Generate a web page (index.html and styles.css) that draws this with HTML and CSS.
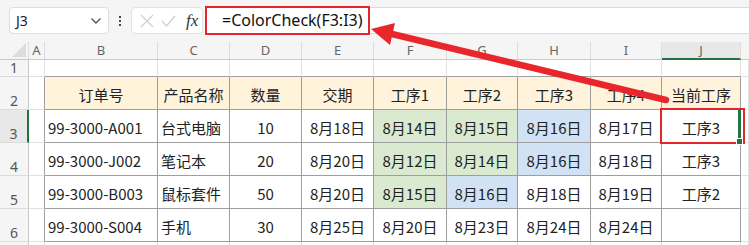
FILE: index.html
```html
<!DOCTYPE html>
<html>
<head>
<meta charset="utf-8">
<link rel="stylesheet" href="styles.css">
</head>
<body>
<div class="app">
  <div class="toolbar">
    <div class="namebox">
      <span class="name">J3</span>
      <svg class="chev" width="12" height="8" viewBox="0 0 12 8"><path d="M1.5 1.5 L6 6 L10.5 1.5" fill="none" stroke="#555" stroke-width="1.4"/></svg>
    </div>
    <div class="dots"><span></span><span></span><span></span></div>
    <div class="fxbox">
      <svg width="14" height="14" viewBox="0 0 14 14"><path d="M1 1 L13 13 M13 1 L1 13" stroke="#d0d0d0" stroke-width="1.3" fill="none"/></svg>
      <svg width="15" height="12" viewBox="0 0 15 12"><path d="M1 6 L5.5 11 L14 1" stroke="#d0d0d0" stroke-width="1.3" fill="none"/></svg>
      <span class="fx">fx</span>
    </div>
    <div class="formula">
      <div class="formula-text">=ColorCheck(F3:I3)</div>
    </div>
  </div>
  <div class="sheet">
    <div class="corner"><svg width="14" height="14" viewBox="0 0 14 14"><path d="M14 0 L14 14 L0 14 Z" fill="#dcdcdc"/></svg></div>
    <div class="ch">A</div><div class="ch">B</div><div class="ch">C</div><div class="ch">D</div><div class="ch">E</div><div class="ch">F</div><div class="ch">G</div><div class="ch">H</div><div class="ch">I</div><div class="ch ch-sel">J</div><div class="ch ch-end"></div>

    <div class="rh">1</div>
    <div class="c"></div><div class="c tb"></div><div class="c tb"></div><div class="c tb"></div><div class="c tb"></div><div class="c tb"></div><div class="c tb"></div><div class="c tb"></div><div class="c tb"></div><div class="c tb"></div><div class="c"></div>

    <div class="rh">2</div>
    <div class="c ta"></div>
    <div class="c t hd">订单号</div><div class="c t hd">产品名称</div><div class="c t hd">数量</div><div class="c t hd">交期</div><div class="c t hd">工序1</div><div class="c t hd">工序2</div><div class="c t hd">工序3</div><div class="c t hd">工序4</div><div class="c t hd">当前工序</div>
    <div class="c"></div>

    <div class="rh rh-sel">3</div>
    <div class="c ta"></div>
    <div class="c t l">99-3000-A001</div><div class="c t l">台式电脑</div><div class="c t">10</div><div class="c t">8月18日</div><div class="c t g">8月14日</div><div class="c t g">8月15日</div><div class="c t b">8月16日</div><div class="c t">8月17日</div><div class="c t sel">工序3<span class="handle"></span></div>
    <div class="c"></div>

    <div class="rh">4</div>
    <div class="c ta"></div>
    <div class="c t l">99-3000-J002</div><div class="c t l">笔记本</div><div class="c t">20</div><div class="c t">8月20日</div><div class="c t g">8月12日</div><div class="c t g">8月14日</div><div class="c t b">8月16日</div><div class="c t">8月18日</div><div class="c t">工序3</div>
    <div class="c"></div>

    <div class="rh">5</div>
    <div class="c ta"></div>
    <div class="c t l">99-3000-B003</div><div class="c t l">鼠标套件</div><div class="c t">50</div><div class="c t">8月20日</div><div class="c t g">8月15日</div><div class="c t b">8月16日</div><div class="c t">8月18日</div><div class="c t">8月19日</div><div class="c t">工序2</div>
    <div class="c"></div>

    <div class="rh">6</div>
    <div class="c ta"></div>
    <div class="c t l">99-3000-S004</div><div class="c t l">手机</div><div class="c t">30</div><div class="c t">8月25日</div><div class="c t">8月20日</div><div class="c t">8月23日</div><div class="c t">8月24日</div><div class="c t">8月24日</div><div class="c t"></div>
    <div class="c"></div>

    <div class="rh"></div>
    <div class="c"></div><div class="c"></div><div class="c"></div><div class="c"></div><div class="c"></div><div class="c"></div><div class="c"></div><div class="c"></div><div class="c"></div><div class="c"></div><div class="c"></div>
  </div>

  <svg class="arrow" width="749" height="245" viewBox="0 0 749 245">
    <line x1="666" y1="100" x2="392" y2="34" stroke="#e8262b" stroke-width="6.5" stroke-linecap="round"/>
    <polygon points="371,29 395,23 390,45" fill="#e8262b"/>
  </svg>
</div>
</body>
</html>
```
FILE: styles.css
```css
html, body {
  margin: 0;
  padding: 0;
  background: #ffffff;
}
.app {
  position: relative;
  width: 749px;
  height: 245px;
  overflow: hidden;
  font-family: "Noto Sans CJK SC", "Noto Sans", sans-serif;
}
.toolbar {
  height: 42px;
  background: #f5f5f5;
  display: flex;
  align-items: flex-start;
  padding-top: 7px;
  box-sizing: border-box;
}
.namebox {
  margin-left: 9px;
  width: 100px;
  height: 27px;
  box-sizing: border-box;
  background: #fff;
  border: 1px solid #dedede;
  border-radius: 4px;
  display: flex;
  align-items: center;
  justify-content: space-between;
  padding: 0 6px 0 6px;
}
.name {
  font-family: "Noto Sans", sans-serif;
  font-size: 14px;
  color: #222;
}
.dots {
  width: 22px;
  height: 27px;
  display: flex;
  flex-direction: column;
  align-items: center;
  justify-content: center;
  gap: 2px;
}
.dots span {
  width: 2px;
  height: 2px;
  background: #444;
}
.fxbox {
  width: 72px;
  height: 27px;
  box-sizing: border-box;
  background: #fff;
  border: 1px solid #e2e2e2;
  border-radius: 4px;
  display: flex;
  align-items: center;
  padding-left: 8px;
  gap: 7px;
}
.fx {
  font-family: "Liberation Serif", "DejaVu Serif", serif;
  font-style: italic;
  font-size: 17px;
  color: #333;
  margin-left: 3px;
}
.formula {
  flex: 1;
  height: 27px;
  margin-left: 2px;
  background: #fff;
  border-top: 1px solid #dcdcdc;
  border-bottom: 1px solid #dcdcdc;
  box-sizing: border-box;
  position: relative;
}
.formula-text {
  position: absolute;
  left: 0;
  top: -2px;
  width: 165px;
  height: 29px;
  box-sizing: border-box;
  border: 2px solid #e3262b;
  font-family: "Noto Sans", sans-serif;
  font-size: 16px;
  color: #111;
  padding-left: 15px;
  line-height: 25px;
}
.sheet {
  display: grid;
  grid-template-columns: 29px 16px 113px 72px 72px 72px 73px 71px 73px 71px 79px 8px;
  grid-template-rows: 18px 17px 33px 33px 33px 33px 33px 10px;
  background: #fff;
}
.corner {
  background: #f5f5f5;
  border-right: 1px solid #dcdcdc;
  border-bottom: 1px solid #c8c8c8;
  display: flex;
  align-items: flex-end;
  justify-content: flex-end;
  padding: 0 2px 2px 0;
  box-sizing: border-box;
}
.ch {
  background: #f5f5f5;
  border-right: 1px solid #dcdcdc;
  border-bottom: 1px solid #c8c8c8;
  box-sizing: border-box;
  font-family: "Noto Sans", sans-serif;
  font-size: 13px;
  color: #666;
  display: flex;
  align-items: center;
  justify-content: center;
  line-height: 1;
}
.ch-sel {
  background: #e8e8e8;
  border-bottom: 2px solid #217346;
}
.ch-end {
  border-right: none;
}
.rh {
  background: #f5f5f5;
  border-right: 1px solid #c8c8c8;
  border-bottom: 1px solid #dcdcdc;
  box-sizing: border-box;
  font-family: "Noto Sans", sans-serif;
  font-size: 14px;
  color: #555;
  display: flex;
  align-items: flex-end;
  justify-content: center;
  line-height: 1;
  padding-bottom: 1px;
}
.rh-sel {
  background: #e8e8e8;
  border-right: 2px solid #217346;
}
.c {
  border-right: 1px solid #e1e1e1;
  border-bottom: 1px solid #e1e1e1;
  box-sizing: border-box;
  font-size: 15px;
  color: #222;
  display: flex;
  align-items: center;
  justify-content: center;
  white-space: nowrap;
  line-height: 20px;
  padding-top: 4px;
}
.c.tb {
  border-bottom-color: #9e9e9e;
}
.c.ta {
  border-right-color: #9e9e9e;
}
.c.t {
  border-right-color: #9e9e9e;
  border-bottom-color: #9e9e9e;
}
.c.hd {
  background: #fff3db;
}
.c.l {
  justify-content: flex-start;
  padding-left: 3px;
}
.c.g {
  background: #d9ead1;
}
.c.b {
  background: #d0e2f4;
}
.c.sel {
  position: relative;
}
.c.sel::before {
  content: "";
  position: absolute;
  right: -1px;
  top: -1px;
  bottom: -1px;
  width: 3px;
  background: #217346;
}
.c.sel::after {
  content: "";
  position: absolute;
  left: -2px;
  right: -5px;
  top: -2px;
  bottom: -2px;
  border: 2px solid #e3262b;
}
.handle {
  position: absolute;
  right: -3px;
  bottom: -3px;
  width: 5px;
  height: 5px;
  background: #217346;
  border: 1px solid #fff;
  z-index: 1;
}
.arrow {
  position: absolute;
  left: 0;
  top: 0;
  pointer-events: none;
}
```
